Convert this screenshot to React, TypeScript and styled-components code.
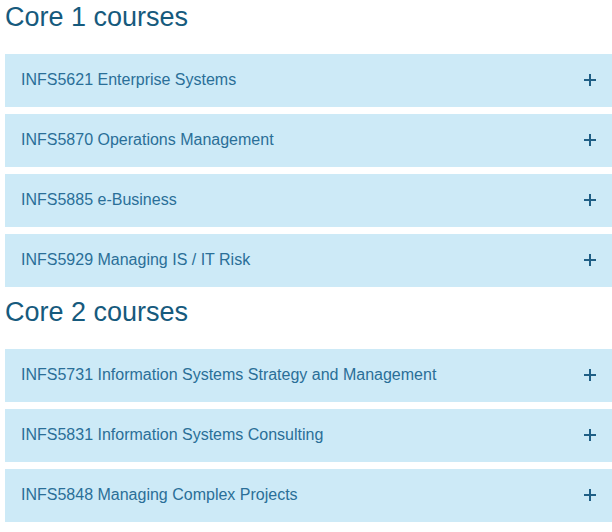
import React from 'react';
import styled, { createGlobalStyle } from 'styled-components';

const GlobalStyle = createGlobalStyle`
  body {
    margin: 0;
    background: #ffffff;
    font-family: "Liberation Sans", Arial, sans-serif;
  }
`;

const Page = styled.div`
  padding: 1px 0 0 5px;
`;

const Heading = styled.h2`
  margin: 0 0 21px;
  font-size: 27px;
  line-height: 32px;
  font-weight: 400;
  color: #165a7d;
`;

const List = styled.div`
  display: flex;
  flex-direction: column;
  gap: 7px;
  margin-bottom: 9px;
`;

const Row = styled.div`
  display: flex;
  align-items: center;
  justify-content: space-between;
  box-sizing: border-box;
  height: 53px;
  padding: 0 16px 2px 16px;
  background: #cdeaf7;
  color: #2a6f98;
  font-size: 16px;
  line-height: 20px;
  cursor: pointer;
`;

const Plus = () => (
  <svg width="12" height="12" viewBox="0 0 12 12">
    <path d="M6 0v12M0 6h12" stroke="#1f5f86" strokeWidth="2" />
  </svg>
);

const sections = [
  {
    title: 'Core 1 courses',
    courses: [
      'INFS5621 Enterprise Systems',
      'INFS5870 Operations Management',
      'INFS5885 e-Business',
      'INFS5929 Managing IS / IT Risk',
    ],
  },
  {
    title: 'Core 2 courses',
    courses: [
      'INFS5731 Information Systems Strategy and Management',
      'INFS5831 Information Systems Consulting',
      'INFS5848 Managing Complex Projects',
    ],
  },
];

const App = () => {
  return (
    <Page>
      <GlobalStyle />
      {sections.map((s) => (
        <section key={s.title}>
          <Heading>{s.title}</Heading>
          <List>
            {s.courses.map((c) => (
              <Row key={c}>
                <span>{c}</span>
                <Plus />
              </Row>
            ))}
          </List>
        </section>
      ))}
    </Page>
  );
};

export default App;
